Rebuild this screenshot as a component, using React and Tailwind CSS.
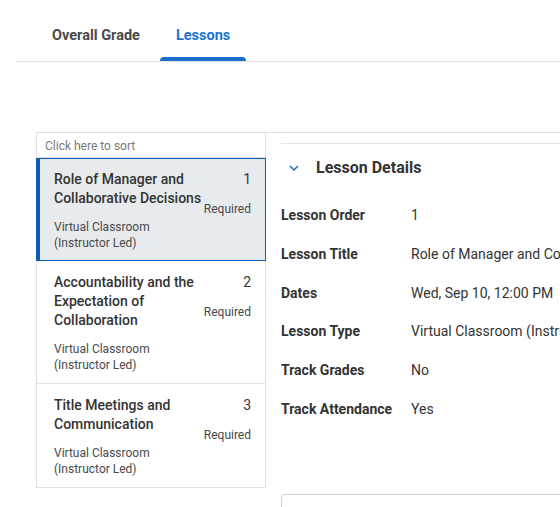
import React from "react";

const lessons = [
  { id: 1, title: "Role of Manager and Collaborative Decisions", type: "Virtual Classroom (Instructor Led)" },
  { id: 2, title: "Accountability and the Expectation of Collaboration", type: "Virtual Classroom (Instructor Led)" },
  { id: 3, title: "Title Meetings and Communication", type: "Virtual Classroom (Instructor Led)" },
];

const details = [
  ["Lesson Order", "1"],
  ["Lesson Title", "Role of Manager and Collaborative Decisions"],
  ["Dates", "Wed, Sep 10, 12:00 PM"],
  ["Lesson Type", "Virtual Classroom (Instructor Led)"],
  ["Track Grades", "No"],
  ["Track Attendance", "Yes"],
];

function LessonItem({ lesson, selected }) {
  return (
    <div
      className={
        selected
          ? "-mx-px border border-l-4 border-[#0b5cbb] bg-[#e8ebee] pt-[11px] pb-[9px] pl-[14px] pr-[14px]"
          : "border-b border-[#e3e3e3] pt-[12px] pb-[10px] pl-[17px] pr-[14px] last:border-b-0"
      }
    >
      <div className="flex">
        <div className="flex-1 min-w-0">
          <div className="text-[14px] leading-[19px] font-medium text-[#333]">{lesson.title}</div>
          <div className="mt-[11px] text-[12px] leading-[16px] text-[#494949] pr-[30px]">{lesson.type}</div>
        </div>
        <div className="flex flex-col items-end">
          <div className="text-[14px] leading-[19px] text-[#333]">{lesson.id}</div>
          <div className="mt-[12px] text-[12px] leading-[16px] text-[#494949]">Required</div>
        </div>
      </div>
    </div>
  );
}

export default function App() {
  return (
    <div className="h-[507px] w-full overflow-hidden bg-white font-['Roboto',sans-serif]">
      <div className="ml-4 border-b border-[#e0e0e0] h-[62px] flex items-start pl-5 gap-1">
        <div className="h-[61px] px-4 pt-[26px] text-[14.5px] leading-[20px] font-bold text-[#4a4a4a]">
          Overall Grade
        </div>
        <div className="relative h-[61px] px-4 pt-[26px] text-[14.5px] leading-[20px] font-bold text-[#1a73d1]">
          Lessons
          <span className="absolute left-0 right-0 bottom-0 h-1 rounded-t bg-[#1a6fcc]" />
        </div>
      </div>

      <div className="mt-[70px] ml-9 flex w-[900px]">
        <div className="w-[230px] border border-[#e0e0e0] shrink-0 self-start">
          <div className="h-[25px] border-b border-[#e0e0e0] pl-2 pt-[5px] text-[12px] leading-[16px] text-[#7a7a7a]">
            Click here to sort
          </div>
          {lessons.map((l, i) => (
            <LessonItem key={l.id} lesson={l} selected={i === 0} />
          ))}
        </div>

        <div className="flex-1 border-t border-[#e0e0e0] pl-[15px]">
          <div className="mt-[10px] border-t border-[#e6e6e6]" />
          <div className="mt-[13px] flex items-center h-[22px]">
            <svg width="10" height="6" viewBox="0 0 10 6" className="ml-[8px]" fill="none">
              <path d="M1 1l4 4 4-4" stroke="#1565c0" strokeWidth="1.4" />
            </svg>
            <span className="ml-[17px] text-[16px] font-bold text-[#333]">Lesson Details</span>
          </div>
          <div className="mt-[26px] flex flex-col gap-[18.8px]">
            {details.map(([label, value]) => (
              <div key={label} className="flex text-[14px] leading-[20px] text-[#333] whitespace-nowrap">
                <div className="w-[130px] font-bold">{label}</div>
                <div>{value}</div>
              </div>
            ))}
          </div>
          <div className="mt-[75px] h-[40px] rounded-[4px] border border-[#cfcfcf]" />
        </div>
      </div>
    </div>
  );
}
